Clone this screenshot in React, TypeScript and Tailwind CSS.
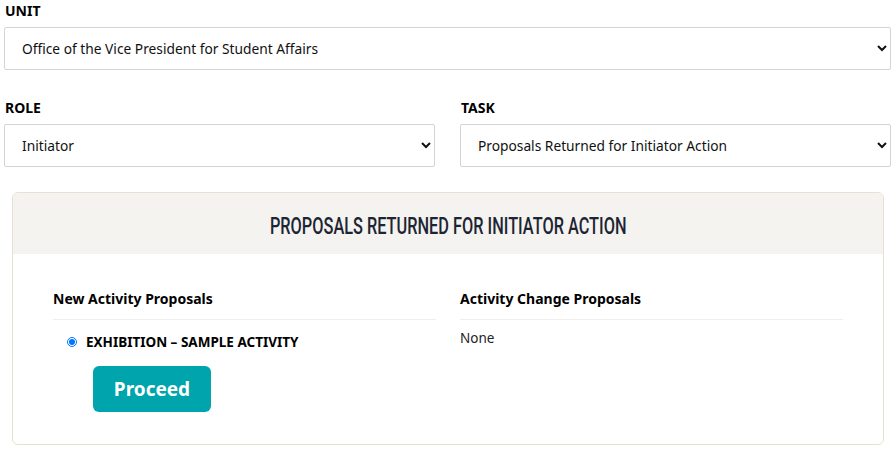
import React, { useState } from 'react';

const body = { fontFamily: '"Noto Sans", "Open Sans", sans-serif' };

function Field({ label, value, options }: { label: string; value: string; options: string[] }) {
  return (
    <div className="flex flex-col">
      <label className="text-[14px] font-bold text-black leading-[18px] pl-[1px] mb-[7px]">{label}</label>
      <select
        defaultValue={value}
        className="h-[43px] w-full rounded-[2px] border border-[#d4d4d4] bg-white pl-[13px] pr-[6px] text-[13.75px] text-[#111]"
      >
        {options.map((o) => (
          <option key={o}>{o}</option>
        ))}
      </select>
    </div>
  );
}

export default function App() {
  const [picked, setPicked] = useState('exh');

  return (
    <div className="bg-white w-[896px] h-[453px] overflow-hidden" style={body}>
      <div className="pl-[4px] pr-[5px] pt-[2px]">
        <Field
          label="UNIT"
          value="Office of the Vice President for Student Affairs"
          options={['Office of the Vice President for Student Affairs']}
        />

        <div className="grid grid-cols-2 gap-[25px] mt-[29px]">
          <Field label="ROLE" value="Initiator" options={['Initiator']} />
          <Field
            label="TASK"
            value="Proposals Returned for Initiator Action"
            options={['Proposals Returned for Initiator Action']}
          />
        </div>
      </div>

      {/* task panel */}
      <div className="mx-[12px] mt-[25px] w-[872px] rounded-[6px] border border-[#e6e1d3] overflow-hidden">
        <div className="h-[61px] pt-[4px] bg-[#f4f3ef] flex items-center justify-center">
          <h2
            className="inline-block text-[24px] font-medium text-[#1d2433] leading-none scale-x-[0.68] whitespace-nowrap"
            style={{ fontFamily: 'Roboto, "Liberation Sans", sans-serif' }}
          >
            PROPOSALS RETURNED FOR INITIATOR ACTION
          </h2>
        </div>

        <div className="grid grid-cols-2 gap-[24px] pl-[40px] pr-[40px] pt-[35px] pb-[32px]">
          <div>
            <h3 className="text-[14px] font-bold text-black leading-[20px] pb-[10px] border-b border-[#eeeeee]">
              New Activity Proposals
            </h3>
            <label className="flex items-center gap-[9px] mt-[12px] ml-[14px]">
              <input
                type="radio"
                checked={picked === 'exh'}
                onChange={() => setPicked('exh')}
                className="w-[10px] h-[10px] m-0"
              />
              <span className="text-[13.5px] font-bold text-black">EXHIBITION – SAMPLE ACTIVITY</span>
            </label>
            <button className="mt-[14px] ml-[40px] h-[46px] w-[118px] rounded-[6px] bg-[#00a4ac] text-white text-[19px] font-bold">
              Proceed
            </button>
          </div>
          <div>
            <h3 className="text-[14px] font-bold text-black leading-[20px] pb-[10px] border-b border-[#eeeeee]">
              Activity Change Proposals
            </h3>
            <p className="text-[13.5px] text-[#222] mt-[8px]">None</p>
          </div>
        </div>
      </div>
    </div>
  );
}
